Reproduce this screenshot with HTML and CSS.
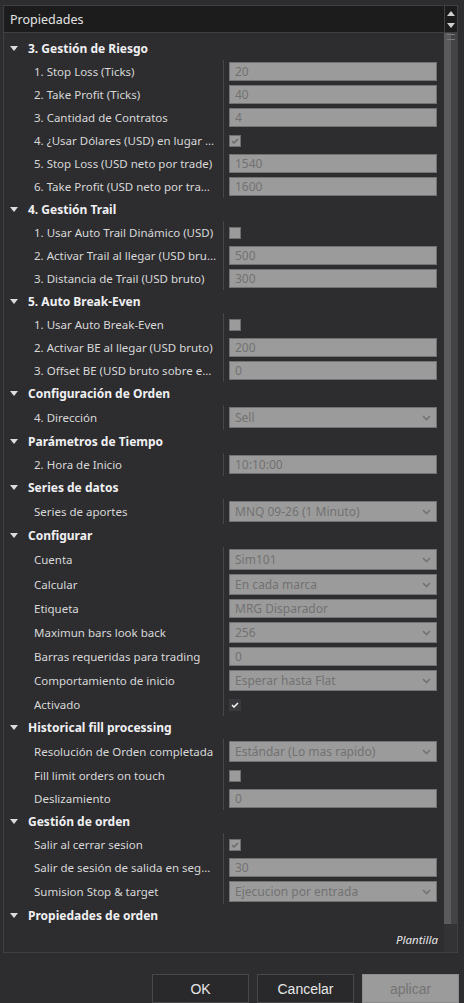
FILE: index.html
```html
<!DOCTYPE html>
<html>
<head>
	<meta charset="UTF-8">
	<title>Propiedades</title>
	<link rel="stylesheet" href="styles.css">
</head>
<body>
	<div class="panel">
		<div class="head">Propiedades</div>
		<div class="spin">
			<svg width="8" height="5" viewBox="0 0 8 5"><polygon points="0,5 8,5 4,0" fill="#cfcfcf"/></svg>
			<svg width="8" height="5" viewBox="0 0 8 5"><polygon points="0,0 8,0 4,5" fill="#cfcfcf"/></svg>
		</div>

		<div class="props">
			<div class="section"><span class="caret"></span>3. Gestión de Riesgo</div>
			<div class="row"><div class="label">1. Stop Loss (Ticks)</div><div class="value"><div class="field">20</div></div></div>
			<div class="row"><div class="label">2. Take Profit (Ticks)</div><div class="value"><div class="field">40</div></div></div>
			<div class="row"><div class="label">3. Cantidad de Contratos</div><div class="value"><div class="field">4</div></div></div>
			<div class="row"><div class="label">4. ¿Usar Dólares (USD) en lugar de Ticks?</div><div class="value"><div class="check"><svg width="8" height="6" viewBox="0 0 8 6"><polyline points="1,3 3,5 7,1" fill="none" stroke="#6a6a6a" stroke-width="1.5"/></svg></div></div></div>
			<div class="row"><div class="label">5. Stop Loss (USD neto por trade)</div><div class="value"><div class="field">1540</div></div></div>
			<div class="row"><div class="label">6. Take Profit (USD neto por trade)</div><div class="value"><div class="field">1600</div></div></div>

			<div class="section"><span class="caret"></span>4. Gestión Trail</div>
			<div class="row"><div class="label">1. Usar Auto Trail Dinámico (USD)</div><div class="value"><div class="check"></div></div></div>
			<div class="row"><div class="label">2. Activar Trail al llegar (USD bruto)</div><div class="value"><div class="field">500</div></div></div>
			<div class="row"><div class="label">3. Distancia de Trail (USD bruto)</div><div class="value"><div class="field">300</div></div></div>

			<div class="section"><span class="caret"></span>5. Auto Break-Even</div>
			<div class="row"><div class="label">1. Usar Auto Break-Even</div><div class="value"><div class="check"></div></div></div>
			<div class="row"><div class="label">2. Activar BE al llegar (USD bruto)</div><div class="value"><div class="field">200</div></div></div>
			<div class="row"><div class="label">3. Offset BE (USD bruto sobre entrada)</div><div class="value"><div class="field">0</div></div></div>

			<div class="section"><span class="caret"></span>Configuración de Orden</div>
			<div class="row tall"><div class="label">4. Dirección</div><div class="value"><div class="field combo">Sell<svg width="9" height="6" viewBox="0 0 9 6"><polyline points="1,1 4.5,4.5 8,1" fill="none" stroke="#737373" stroke-width="1.6"/></svg></div></div></div>

			<div class="section"><span class="caret"></span>Parámetros de Tiempo</div>
			<div class="row"><div class="label">2. Hora de Inicio</div><div class="value"><div class="field">10:10:00</div></div></div>

			<div class="section"><span class="caret"></span>Series de datos</div>
			<div class="row tall"><div class="label">Series de aportes</div><div class="value"><div class="field combo">MNQ 09-26 (1 Minuto)<svg width="9" height="6" viewBox="0 0 9 6"><polyline points="1,1 4.5,4.5 8,1" fill="none" stroke="#737373" stroke-width="1.6"/></svg></div></div></div>

			<div class="section"><span class="caret"></span>Configurar</div>
			<div class="row tall"><div class="label">Cuenta</div><div class="value"><div class="field combo">Sim101<svg width="9" height="6" viewBox="0 0 9 6"><polyline points="1,1 4.5,4.5 8,1" fill="none" stroke="#737373" stroke-width="1.6"/></svg></div></div></div>
			<div class="row tall"><div class="label">Calcular</div><div class="value"><div class="field combo">En cada marca<svg width="9" height="6" viewBox="0 0 9 6"><polyline points="1,1 4.5,4.5 8,1" fill="none" stroke="#737373" stroke-width="1.6"/></svg></div></div></div>
			<div class="row"><div class="label">Etiqueta</div><div class="value"><div class="field">MRG Disparador</div></div></div>
			<div class="row tall"><div class="label">Maximun bars look back</div><div class="value"><div class="field combo">256<svg width="9" height="6" viewBox="0 0 9 6"><polyline points="1,1 4.5,4.5 8,1" fill="none" stroke="#737373" stroke-width="1.6"/></svg></div></div></div>
			<div class="row"><div class="label">Barras requeridas para trading</div><div class="value"><div class="field">0</div></div></div>
			<div class="row tall"><div class="label">Comportamiento de inicio</div><div class="value"><div class="field combo">Esperar hasta Flat<svg width="9" height="6" viewBox="0 0 9 6"><polyline points="1,1 4.5,4.5 8,1" fill="none" stroke="#737373" stroke-width="1.6"/></svg></div></div></div>
			<div class="row"><div class="label">Activado</div><div class="value"><div class="check on"><svg width="8" height="6" viewBox="0 0 8 6"><polyline points="1,3 3,5 7,1" fill="none" stroke="#f2f2f2" stroke-width="1.6"/></svg></div></div></div>

			<div class="section"><span class="caret"></span>Historical fill processing</div>
			<div class="row tall"><div class="label">Resolución de Orden completada</div><div class="value"><div class="field combo">Estándar (Lo mas rapido)<svg width="9" height="6" viewBox="0 0 9 6"><polyline points="1,1 4.5,4.5 8,1" fill="none" stroke="#737373" stroke-width="1.6"/></svg></div></div></div>
			<div class="row"><div class="label">Fill limit orders on touch</div><div class="value"><div class="check"></div></div></div>
			<div class="row"><div class="label">Deslizamiento</div><div class="value"><div class="field">0</div></div></div>

			<div class="section"><span class="caret"></span>Gestión de orden</div>
			<div class="row"><div class="label">Salir al cerrar sesion</div><div class="value"><div class="check"><svg width="8" height="6" viewBox="0 0 8 6"><polyline points="1,3 3,5 7,1" fill="none" stroke="#6a6a6a" stroke-width="1.5"/></svg></div></div></div>
			<div class="row"><div class="label">Salir de sesión de salida en segundos</div><div class="value"><div class="field">30</div></div></div>
			<div class="row tall"><div class="label">Sumision Stop &amp; target</div><div class="value"><div class="field combo">Ejecucion por entrada<svg width="9" height="6" viewBox="0 0 9 6"><polyline points="1,1 4.5,4.5 8,1" fill="none" stroke="#737373" stroke-width="1.6"/></svg></div></div></div>

			<div class="section"><span class="caret"></span>Propiedades de orden</div>

			<div class="template">Plantilla</div>
		</div>

		<div class="scroll"><div class="thumb"></div></div>
	</div>

	<div class="actions">
		<button class="btn">OK</button>
		<button class="btn">Cancelar</button>
		<button class="btn off">aplicar</button>
	</div>
</body>
</html>
```

FILE: styles.css
```css
body {
	margin: 0;
	height: 1003px;
	overflow: hidden;
	background-color: #2d2d30;
	font-family: "Noto Sans", "Liberation Sans", sans-serif;
	font-size: 11.5px;
	color: #d8d8d8;
}

.panel {
	margin: 5px 0 0 3px;
	width: 455px;
	height: 948px;
	box-sizing: border-box;
	border: 1px solid #404044;
	display: grid;
	grid-template-columns: 1fr 13px;
	grid-template-rows: 27px 1fr;
}

.head {
	background-color: #1c1c1d;
	border-bottom: 1px solid #404044;
	padding-left: 6px;
	display: flex;
	align-items: center;
	font-size: 12.5px;
	color: #e4e4e4;
}

.spin {
	background-color: #1c1c1d;
	border-left: 1px solid #404044;
	border-bottom: 1px solid #404044;
	display: flex;
	flex-direction: column;
	align-items: center;
	justify-content: center;
	gap: 7px;
}

.props {
	padding-top: 4px;
	display: flex;
	flex-direction: column;
	min-height: 0;
}

.section {
	height: 23px;
	flex-shrink: 0;
	display: flex;
	align-items: center;
	padding-left: 6px;
	font-weight: bold;
	font-size: 12px;
	color: #f0f0f2;
}

.caret {
	width: 0;
	height: 0;
	border-left: 4px solid transparent;
	border-right: 4px solid transparent;
	border-top: 5px solid #dcdcdc;
	margin-right: 10px;
}

.row {
	height: 23px;
	flex-shrink: 0;
	display: flex;
}

.row.tall {
	height: 25px;
}

.label {
	width: 220px;
	box-sizing: border-box;
	padding: 0 6px 0 30px;
	border-right: 1px solid #47474a;
	line-height: 23px;
	white-space: nowrap;
	overflow: hidden;
	text-overflow: ellipsis;
}

.row.tall .label {
	line-height: 25px;
}

.value {
	flex: 1;
	display: flex;
	align-items: center;
	padding: 0 7px 0 5px;
}

.field {
	flex: 1;
	height: 19px;
	box-sizing: border-box;
	background-color: #9b9b9b;
	border: 1px solid #727272;
	color: #727272;
	padding: 0 5px;
	display: flex;
	align-items: center;
	justify-content: space-between;
	font-size: 12px;
	white-space: nowrap;
}

.field.combo {
	height: 21px;
}

.check {
	width: 12px;
	height: 12px;
	box-sizing: border-box;
	background-color: #9b9b9b;
	border: 1px solid #6e6e6e;
	display: flex;
	align-items: center;
	justify-content: center;
}

.check.on {
	background-color: #3a3a3e;
	border-color: #3a3a3e;
}

.template {
	flex: 1;
	display: flex;
	align-items: center;
	justify-content: flex-end;
	padding-right: 6px;
	font-style: italic;
	font-size: 11.5px;
	color: #e6e6e6;
}

.scroll {
	background-color: #333336;
}

.thumb {
	position: relative;
	height: 891px;
	background: linear-gradient(to right, #5b5b5d 7px, #434346 7px);
}

.thumb::before {
	content: "";
	position: absolute;
	left: 3px;
	right: 2px;
	top: 1px;
	height: 4px;
	border-top: 1px solid #78787a;
	border-bottom: 1px solid #78787a;
}

.actions {
	display: flex;
	justify-content: flex-end;
	gap: 8px;
	padding: 21px 5px 0 0;
}

.btn {
	width: 97px;
	height: 29px;
	background-color: #29292b;
	border: 1px solid #48484b;
	color: #e6e6e6;
	font-family: "Liberation Sans", Arial, sans-serif;
	font-size: 14px;
	padding: 0;
}

.btn.off {
	background-color: #9b9b9b;
	border-color: #8c8c8c;
	color: #747474;
}
```
